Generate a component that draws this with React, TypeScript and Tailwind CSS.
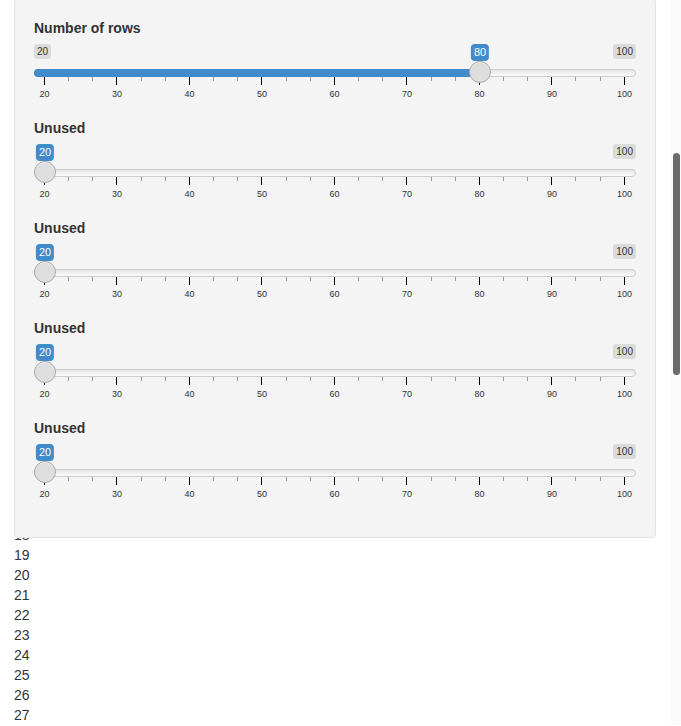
import React from 'react';

interface SliderProps {
  label: string;
  value: number;
  min?: number;
  max?: number;
}

const GRID_W = 580;
const majors = [20, 30, 40, 50, 60, 70, 80, 90, 100];
const ticks = Array.from({ length: 25 }, (_, i) => i);

const Slider: React.FC<SliderProps> = ({ label, value, min = 20, max = 100 }) => {
  const p = (value - min) / (max - min);
  const center = 11 + p * GRID_W;
  // min label gets hidden when the value label covers it
  const showMin = center > 40;

  return (
    <div className="flex flex-col mb-[15px]">
      <label className="h-5 leading-5 mb-[6px] text-[14px] font-bold text-[#333]">{label}</label>

      <div className="relative flex flex-col h-[59px]">
        <div className="flex justify-between items-start h-[25px]">
          <span className={`px-[3px] py-px rounded-[3px] bg-black/10 text-[10px] leading-[1.333] text-[#333] ${showMin ? '' : 'invisible'}`}>
            {min}
          </span>
          <span className="px-[3px] py-px rounded-[3px] bg-black/10 text-[10px] leading-[1.333] text-[#333]">
            {max}
          </span>
        </div>

        <div className="relative h-2">
          <div className="h-full rounded-full border border-[#cccccc] bg-gradient-to-b from-[#e4e4e4] to-[#fbfbfb]" />
          {value > min && (
            <div className="absolute left-0 top-0 h-2 rounded-l-full bg-[#428bca]" style={{ width: center }} />
          )}
          <div
            className="absolute top-[-8px] w-[22px] h-[22px] -ml-[11px] rounded-full border border-[#ababab] bg-[#dedede] shadow-[inset_0_1px_1px_rgba(255,255,255,0.4)]"
            style={{ left: center }}
          />
        </div>

        <div className="flex justify-between items-start h-2 pl-[10px] pr-[11px]">
          {ticks.map((i) => (
            <div key={i} className={`w-px ${i % 3 === 0 ? 'h-2 bg-black' : 'h-1 bg-[#9a9a9a]'}`} />
          ))}
        </div>

        <div className="flex justify-between mt-[5px] pl-[10px] pr-[11px]">
          {majors.map((m) => (
            <div key={m} className="w-px flex justify-center">
              <span className="text-[9px] leading-[9px] text-[#333] whitespace-nowrap">{m}</span>
            </div>
          ))}
        </div>

        <span
          className="absolute top-0 -translate-x-1/2 px-[3px] py-px rounded-[4px] bg-[#428bca] text-white text-[11px] leading-[1.333] whitespace-nowrap"
          style={{ left: center }}
        >
          {value}
        </span>
      </div>
    </div>
  );
};

export default function App() {
  const rows = Array.from({ length: 27 }, (_, i) => i + 1);

  return (
    <div className="relative min-h-[725px] bg-white font-['Liberation_Sans',Arial,sans-serif] text-[#333] overflow-hidden">
      <div className="flex flex-col pt-[185px] pl-[14px] text-[14px] leading-5">
        {rows.map((n) => (
          <div key={n}>{n}</div>
        ))}
      </div>

      {/* well panel pinned over the scrolled list */}
      <div className="absolute left-[14px] top-[-2px] w-[642px] flex flex-col p-[19px] rounded border border-[#e3e3e3] bg-[#f4f4f4] shadow-[inset_0_1px_1px_rgba(0,0,0,0.05)]">
        <Slider label="Number of rows" value={80} />
        <Slider label="Unused" value={20} />
        <Slider label="Unused" value={20} />
        <Slider label="Unused" value={20} />
        <Slider label="Unused" value={20} />
      </div>

      <div className="absolute right-0 top-0 bottom-0 w-[10px] bg-[#fafafa]" />
      <div className="absolute right-px top-[153px] w-[7px] h-[222px] rounded-full bg-[#6b6b6b]" />
    </div>
  );
}
